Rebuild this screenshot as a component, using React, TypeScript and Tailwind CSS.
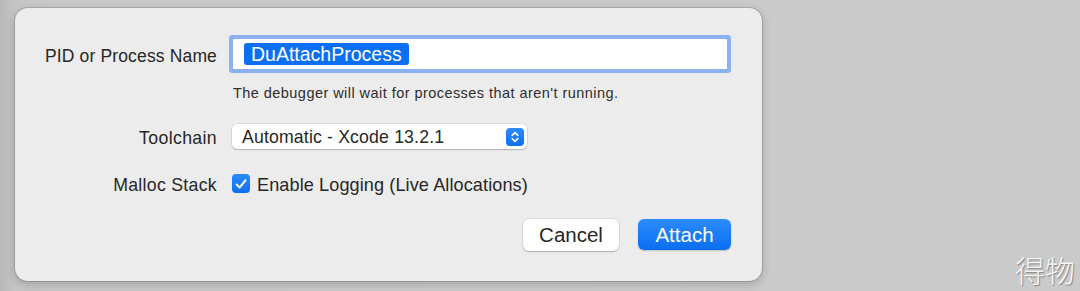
export default function App() {
  return (
    <div className="relative h-[291px] w-[1080px] overflow-hidden bg-[linear-gradient(90deg,#b9b9b9_0px,#c4c4c4_14px,#c9c9c9_60px,#cacaca_100%)] pl-[15px] pt-[8px] font-['Liberation_Sans',Arial,sans-serif]">
      {/* dialog */}
      <div className="h-[273px] w-[747px] rounded-[13px] bg-[#ececec] pr-[31px] pt-[31px] text-[#272727] shadow-[0_0_0_1px_rgba(0,0,0,0.13),0_3px_10px_rgba(0,0,0,0.2)]">
        {/* name field */}
        <div className="flex items-center">
          <div className="w-[202px] pt-[3px] text-right text-[17.5px] leading-[22px] tracking-[0.15px]">PID or Process Name</div>
          <div className="ml-[16px] mr-[4px] flex h-[30px] flex-1 items-center rounded-[1px] bg-white pl-[11px] ring-4 ring-[#8cb1f2]">
            <span className="rounded-[3px] bg-[#0b6ff4] px-[7px] text-[19.5px] leading-[22px] text-white">DuAttachProcess</span>
          </div>
        </div>

        <div className="ml-[218px] mt-[16px] text-[14.5px] leading-[16px] tracking-[0.45px] text-[#2e2e2e]">
          The debugger will wait for processes that aren't running.
        </div>

        {/* toolchain */}
        <div className="mt-[23px] flex items-center">
          <div className="w-[202px] pt-[3px] text-right text-[17.7px] leading-[22px] tracking-[0.35px]">Toolchain</div>
          <div className="ml-[15px] flex h-[25px] w-[295px] items-center justify-between rounded-[5px] bg-white pl-[10px] pr-[3px] shadow-[0_0_0_0.5px_rgba(0,0,0,0.12),0_1px_1.5px_rgba(0,0,0,0.2)]">
            <span className="text-[17.7px] leading-[22px] tracking-[0.15px]">Automatic - Xcode 13.2.1</span>
            <span className="flex h-[18px] w-[18px] items-center justify-center rounded-[4px] bg-[linear-gradient(#2b8afc,#0c6ff2)]">
              <svg width="18" height="18" viewBox="0 0 18 18" fill="none" stroke="white" strokeWidth="1.6" strokeLinecap="round" strokeLinejoin="round">
                <path d="M6.2 7.4 L9 4.6 L11.8 7.4" />
                <path d="M6.2 10.6 L9 13.4 L11.8 10.6" />
              </svg>
            </span>
          </div>
        </div>

        {/* malloc stack */}
        <div className="mt-[25px] flex h-[19px] items-center">
          <div className="w-[202px] pt-[2px] text-right text-[17.7px] leading-[22px] tracking-[0.3px]">Malloc Stack</div>
          <span className="ml-[15px] flex h-[19px] w-[18px] items-center justify-center rounded-[4px] bg-[linear-gradient(#2b8afc,#0c6ff2)]">
            <svg width="18" height="18" viewBox="0 0 18 18" fill="none" stroke="white" strokeWidth="2.1" strokeLinecap="round" strokeLinejoin="round">
              <path d="M4.6 9.6 L7.6 12.6 L13.4 5.4" />
            </svg>
          </span>
          <span className="ml-[7px] pt-[2px] text-[18.1px] leading-[22px] tracking-[0.1px]">Enable Logging (Live Allocations)</span>
        </div>

        {/* buttons */}
        <div className="mt-[26px] flex items-start justify-end gap-[19px]">
          <button className="flex h-[32px] w-[96px] items-center justify-center rounded-[6px] bg-white text-[20.5px] leading-[24px] text-[#262626] shadow-[0_0_0_0.5px_rgba(0,0,0,0.12),0_1px_1.5px_rgba(0,0,0,0.22)]">
            Cancel
          </button>
          <button className="flex h-[31px] w-[93px] items-center justify-center rounded-[6px] bg-[linear-gradient(#2b8cfd,#0a6ef1)] text-[20.5px] leading-[24px] text-white shadow-[0_1px_1.5px_rgba(0,0,0,0.2)]">
            Attach
          </button>
        </div>
      </div>

      {/* watermark */}
      <div className="absolute bottom-[5px] right-[5px] font-['Noto_Sans_CJK_SC',sans-serif] text-[30px] font-light leading-[34px] text-[#f6f6f6] [text-shadow:1px_1px_1px_rgba(0,0,0,0.35)]">
        得物
      </div>
    </div>
  );
}
